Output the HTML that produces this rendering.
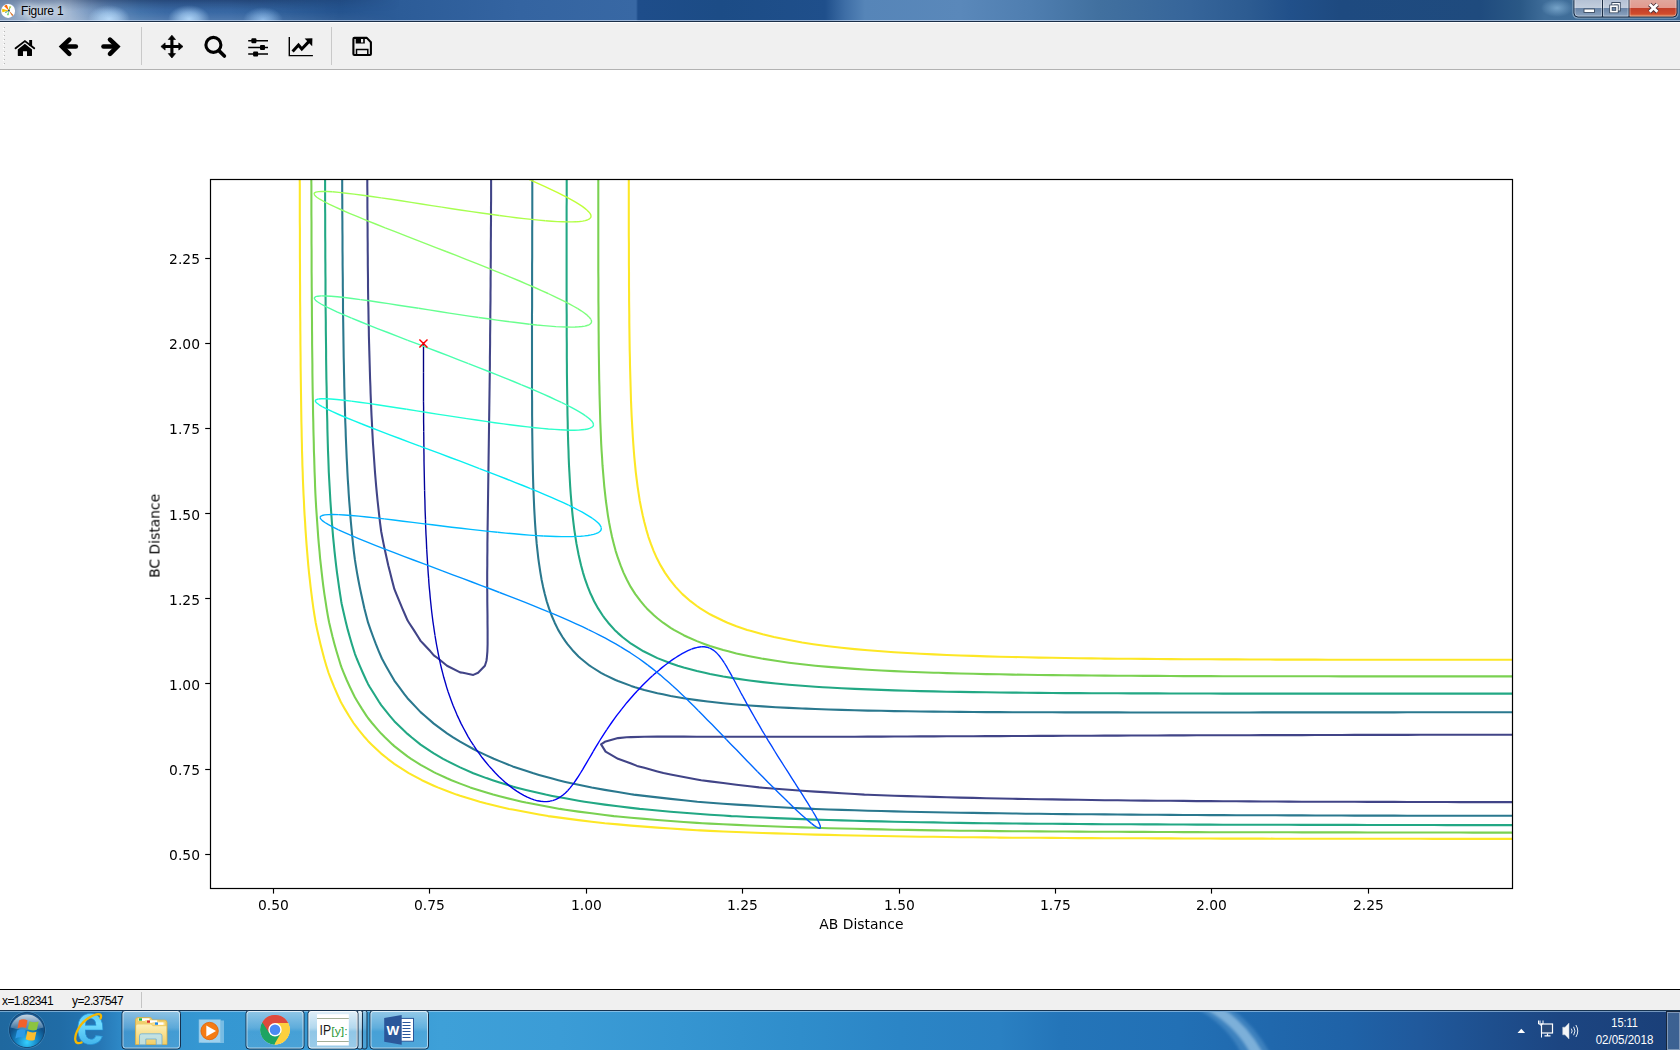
<!DOCTYPE html>
<html><head><meta charset="utf-8"><title>Figure 1</title>
<style>
html,body{margin:0;padding:0;}
body{width:1680px;height:1050px;overflow:hidden;position:relative;background:#fff;font-family:"Liberation Sans",sans-serif;}
#titlebar{position:absolute;left:0;top:0;width:1680px;height:22px;overflow:hidden;
 background:
 radial-gradient(ellipse 21px 14px at 109px 19px,rgba(178,216,250,.95) 0,rgba(178,216,250,.62) 45%,rgba(178,216,250,0) 100%),
 radial-gradient(ellipse 21px 14px at 189px 19px,rgba(170,212,250,.95) 0,rgba(170,212,250,.62) 45%,rgba(170,212,250,0) 100%),
 radial-gradient(ellipse 20px 13px at 263px 20px,rgba(150,198,245,.8) 0,rgba(150,198,245,.48) 45%,rgba(150,198,245,0) 100%),
 radial-gradient(ellipse 16px 9px at 1557px 8px,rgba(140,185,220,.7) 0,rgba(140,185,220,0) 100%),
 linear-gradient(to right,#8099bb 0,#93abc9 30px,#a0b6d2 70px,#7d9cc3 88px,#5f87b8 110px,#4373ab 140px,#3a69a4 165px,#3868a4 230px,#2d5d98 290px,#25548f 340px,#2c5c98 400px,#3464a1 520px,#3868a4 636px,#1e4d8a 638px,#1c4c86 720px,#1f4f8b 825px,#3e6ea6 845px,#5685b8 865px,#5a88ba 960px,#4f7eb0 1030px,#41709f 1100px,#36659a 1190px,#2c5b91 1250px,#21508a 1290px,#1e4a80 1340px,#1f4b7e 1480px,#2a5886 1520px,#3f6d99 1545px,#406e99 1575px,#3a6894 1680px);}
#titlebar .shade{position:absolute;left:0;top:0;width:420px;height:22px;-webkit-mask-image:linear-gradient(to right,rgba(0,0,0,.45) 0,rgba(0,0,0,.6) 60px,#000 100px,#000 250px,transparent 400px);mask-image:linear-gradient(to right,rgba(0,0,0,.45) 0,rgba(0,0,0,.6) 60px,#000 100px,#000 250px,transparent 400px);background:linear-gradient(to bottom,rgba(12,28,66,.42) 0,rgba(12,28,66,.24) 4px,rgba(12,28,66,.06) 9px,rgba(255,255,255,0) 12px,rgba(255,255,255,.10) 19px);}
#titlebar .line1{position:absolute;left:0;top:20px;width:100%;height:1px;background:rgba(215,228,245,.62);}
#titlebar .line2{position:absolute;left:0;top:21px;width:100%;height:1px;background:#1a2e48;}
#title{position:absolute;left:21px;top:4px;font-size:12px;line-height:14px;color:#000;letter-spacing:-0.2px;text-shadow:0 0 6px #fff,0 0 9px #fff,0 0 12px #fff;}
#toolbar{position:absolute;left:0;top:22px;width:1680px;height:47px;background:#f0f0f0;border-top:1px solid #fff;box-sizing:border-box;}
#tbline{position:absolute;left:0;top:69px;width:1680px;height:1px;background:#b2b2b2;}
#canvas{position:absolute;left:0;top:70px;width:1680px;height:919px;background:#fff;}
#cline{position:absolute;left:0;top:989px;width:1680px;height:1px;background:#000;}
#status{position:absolute;left:0;top:990px;width:1680px;height:20px;background:#f0f0f0;font-size:12px;letter-spacing:-0.6px;color:#000;}
#status span{position:absolute;top:4px;line-height:14px;white-space:pre;}
#taskbar{position:absolute;left:0;top:1010px;width:1680px;height:40px;overflow:hidden;
 background:linear-gradient(to right,#1f689f 0,#206ca6 60px,#2677b5 100px,#2f8cca 125px,#3597d2 200px,#3799d3 380px,#3ea0d8 440px,#3b9cd6 560px,#3595d1 680px,#2f8dcb 800px,#2b85c6 900px,#2a80c2 1000px,#2475b9 1060px,#2270b5 1180px,#2068ad 1270px,#1f62a7 1350px,#20599c 1420px,#1e4f8e 1490px,#1c4581 1560px,#1a3f78 1680px);}
#taskbar .top1{position:absolute;left:0;top:0;width:100%;height:1px;background:#16324f;}
#taskbar .top2{position:absolute;left:0;top:1px;width:100%;height:1px;background:rgba(190,220,245,.55);}
.tbtn{position:absolute;top:3px;height:36px;border-radius:3px;box-sizing:border-box;border:1px solid rgba(20,50,90,.75);box-shadow:inset 0 0 0 1px rgba(255,255,255,.45);background:linear-gradient(to bottom,rgba(255,255,255,.38) 0,rgba(255,255,255,.22) 48%,rgba(255,255,255,.08) 52%,rgba(255,255,255,.16) 100%);}
#plot{position:absolute;left:0;top:0;width:1680px;height:1050px;}
.tick{font-family:"DejaVu Sans",sans-serif;font-size:13.89px;fill:#000;}
</style></head>
<body>
<div id="titlebar"><div class="shade"></div><div class="line1"></div><div class="line2"></div>
<div id="title">Figure 1</div>
</div>
<div id="toolbar"></div><div id="tbline"></div>
<div id="canvas"></div><div id="cline"></div>
<div id="status"><span style="left:2px">x=1.82341</span><span style="left:72px">y=2.37547</span>
<div style="position:absolute;left:141px;top:2px;width:1px;height:16px;background:#c4c4c4"></div></div>
<div id="taskbar"><div class="top1"></div><div class="top2"></div></div>
<svg id="plot" width="1680" height="1050" viewBox="0 0 1680 1050">
<defs><clipPath id="axclip"><rect x="210.5" y="179.5" width="1302" height="709"/></clipPath></defs>
<g clip-path="url(#axclip)">
<g fill="none" stroke-width="2.08" stroke-linejoin="round">
<path stroke="#414487" d="M1512.5 802.1 L1499.3 802.1 L1486.2 802.1 L1473.0 802.1 L1459.9 802.1 L1446.7 802.0 L1433.6 802.0 L1420.4 802.0 L1407.2 802.0 L1394.1 801.9 L1380.9 801.9 L1367.8 801.9 L1354.6 801.8 L1341.5 801.8 L1328.3 801.8 L1315.6 801.7 L1302.0 801.7 L1288.9 801.6 L1275.7 801.5 L1262.5 801.5 L1249.4 801.4 L1236.2 801.3 L1223.1 801.2 L1209.9 801.1 L1196.8 801.1 L1183.6 800.9 L1170.5 800.8 L1157.3 800.7 L1144.2 800.6 L1131.0 800.5 L1117.8 800.3 L1104.7 800.2 L1091.5 800.0 L1078.4 799.8 L1065.2 799.6 L1052.1 799.4 L1038.9 799.2 L1025.8 799.0 L1012.6 798.8 L999.5 798.5 L986.3 798.2 L973.1 797.9 L960.0 797.6 L946.8 797.3 L933.7 796.9 L920.5 796.5 L907.4 796.1 L894.2 795.7 L881.1 795.2 L867.9 794.7 L864.4 794.6 L854.7 794.0 L841.6 793.3 L828.4 792.4 L815.3 791.6 L802.1 790.7 L789.0 789.7 L775.8 788.7 L762.7 787.7 L759.1 787.4 L749.5 786.3 L736.4 784.7 L723.2 783.0 L710.0 781.4 L701.2 780.2 L696.9 779.4 L683.7 776.9 L670.6 774.4 L663.4 773.1 L657.4 771.4 L644.3 767.8 L637.0 765.9 L631.1 763.5 L618.0 758.8 L605.6 751.6 L601.1 744.4 L604.8 741.8 L618.0 738.1 L626.6 737.3 L631.1 737.1 L644.3 736.8 L657.4 736.6 L670.6 736.6 L683.7 736.6 L696.9 736.7 L710.0 736.7 L723.2 736.8 L736.4 736.8 L749.5 736.8 L762.7 736.8 L775.8 736.8 L789.0 736.8 L802.1 736.8 L815.3 736.8 L828.4 736.8 L841.6 736.7 L854.7 736.7 L867.9 736.6 L881.1 736.6 L894.2 736.5 L907.4 736.5 L920.5 736.4 L933.7 736.4 L946.8 736.3 L960.0 736.3 L973.1 736.2 L986.3 736.1 L999.5 736.1 L1012.6 736.0 L1025.8 736.0 L1038.9 735.9 L1052.1 735.9 L1065.2 735.8 L1078.4 735.7 L1091.5 735.7 L1104.7 735.6 L1117.8 735.6 L1131.0 735.5 L1144.2 735.5 L1157.3 735.5 L1170.5 735.4 L1183.6 735.4 L1196.8 735.3 L1209.9 735.3 L1223.1 735.3 L1236.2 735.2 L1249.4 735.2 L1262.5 735.1 L1275.7 735.1 L1288.9 735.1 L1302.0 735.1 L1315.2 735.0 L1328.3 735.0 L1341.5 735.0 L1354.6 734.9 L1367.8 734.9 L1380.9 734.9 L1394.1 734.9 L1407.2 734.9 L1420.4 734.8 L1433.6 734.8 L1446.7 734.8 L1459.9 734.8 L1473.0 734.8 L1486.2 734.7 L1499.3 734.7 L1512.5 734.7"/>
<path stroke="#414487" d="M491.1 178.7 L491.1 185.9 L491.1 193.0 L491.1 200.2 L491.0 207.4 L491.0 214.5 L491.0 221.7 L490.9 228.8 L490.9 236.0 L490.8 243.2 L490.8 250.3 L490.8 257.5 L490.7 264.6 L490.7 271.8 L490.6 279.0 L490.6 286.1 L490.5 293.3 L490.5 300.4 L490.4 307.6 L490.3 314.8 L490.3 321.9 L490.2 329.1 L490.1 336.3 L490.1 343.4 L490.0 350.6 L489.9 357.7 L489.9 364.9 L489.8 372.1 L489.7 379.2 L489.6 386.4 L489.5 393.5 L489.4 400.7 L489.3 407.9 L489.2 415.0 L489.1 422.2 L489.0 429.3 L488.9 436.5 L488.8 443.7 L488.7 450.8 L488.6 458.0 L488.5 465.2 L488.4 472.3 L488.3 479.5 L488.2 486.6 L488.1 493.8 L488.0 501.0 L487.9 508.1 L487.8 515.3 L487.7 522.4 L487.6 529.6 L487.5 536.8 L487.4 543.9 L487.4 551.1 L487.3 558.3 L487.3 565.4 L487.2 572.6 L487.2 579.7 L487.2 586.9 L487.3 594.1 L487.3 601.2 L487.4 608.4 L487.5 615.5 L487.5 622.7 L487.6 629.9 L487.6 637.0 L487.6 644.2 L487.4 651.3 L486.8 658.5 L486.4 661.0 L484.9 665.7 L478.1 672.8 L473.3 674.9 L463.0 672.8 L460.1 672.4 L447.0 665.7 L438.2 658.5 L433.8 655.3 L430.4 651.3 L423.8 644.2 L420.6 640.9 L418.2 637.0 L413.7 629.9 L409.0 622.7 L407.5 620.3 L405.4 615.5 L402.3 608.4 L399.3 601.2 L396.4 594.1 L394.3 588.9 L393.8 586.9 L391.9 579.7 L390.1 572.6 L388.3 565.4 L386.7 558.3 L385.1 551.1 L383.6 543.9 L382.2 536.8 L381.2 531.5 L380.0 522.4 L379.2 515.3 L378.4 508.1 L377.6 501.0 L376.9 493.8 L376.2 486.6 L375.6 479.5 L375.0 472.3 L374.5 465.2 L374.0 458.0 L373.5 450.8 L373.0 443.7 L372.6 436.5 L372.2 429.3 L371.9 422.2 L371.5 415.0 L371.2 407.9 L370.9 400.7 L370.6 393.5 L370.4 386.4 L370.1 379.2 L369.9 372.1 L369.7 364.9 L369.5 357.7 L369.3 350.6 L369.1 343.4 L368.9 336.3 L368.8 329.1 L368.6 321.9 L368.5 314.8 L368.4 307.6 L368.2 300.4 L368.1 293.3 L368.0 286.1 L368.0 279.0 L367.9 271.8 L367.8 264.6 L367.8 257.5 L367.7 250.3 L367.7 243.2 L367.6 236.0 L367.6 228.8 L367.5 221.7 L367.5 214.5 L367.4 207.4 L367.4 200.2 L367.4 193.0 L367.3 185.9 L367.3 178.7"/>
<path stroke="#2a788e" d="M1512.5 815.8 L1499.3 815.8 L1486.2 815.8 L1473.0 815.8 L1459.9 815.7 L1446.7 815.7 L1433.6 815.7 L1420.4 815.7 L1407.2 815.7 L1394.1 815.6 L1380.9 815.6 L1367.8 815.6 L1354.6 815.6 L1341.5 815.5 L1328.3 815.5 L1315.2 815.5 L1302.0 815.4 L1288.9 815.4 L1275.7 815.3 L1262.5 815.3 L1249.4 815.2 L1236.2 815.2 L1223.1 815.1 L1209.9 815.1 L1196.8 815.0 L1183.6 815.0 L1170.5 814.9 L1157.3 814.8 L1144.2 814.7 L1131.0 814.6 L1117.8 814.5 L1104.7 814.4 L1091.5 814.3 L1078.4 814.2 L1065.2 814.1 L1052.1 814.0 L1038.9 813.8 L1025.8 813.7 L1012.6 813.5 L999.5 813.3 L986.3 813.1 L973.1 812.9 L960.0 812.7 L946.8 812.5 L933.7 812.2 L920.5 812.0 L907.4 811.7 L894.2 811.4 L881.1 811.0 L867.9 810.7 L854.7 810.3 L841.6 809.9 L828.4 809.5 L815.3 809.0 L812.7 808.9 L802.1 808.4 L789.0 807.7 L775.8 807.0 L762.7 806.2 L749.5 805.4 L736.4 804.6 L723.2 803.7 L710.0 802.7 L697.3 801.7 L683.7 800.3 L670.6 798.9 L657.4 797.4 L644.3 795.9 L633.7 794.6 L631.1 794.2 L618.0 792.0 L604.8 789.9 L591.7 787.6 L578.5 784.8 L565.3 781.9 L558.3 780.2 L552.2 778.6 L539.0 774.9 L532.7 773.1 L525.9 770.8 L512.7 766.4 L499.6 761.1 L493.8 758.8 L486.4 755.4 L478.4 751.6 L473.3 749.0 L465.0 744.4 L460.1 741.6 L453.1 737.3 L447.0 733.3 L442.6 730.1 L433.8 723.6 L424.8 715.8 L420.6 712.1 L417.3 708.6 L410.6 701.5 L407.5 698.2 L404.5 694.3 L399.2 687.2 L394.3 680.6 L389.8 672.8 L385.8 665.7 L381.9 658.5 L378.8 651.3 L375.9 644.2 L373.2 637.0 L370.6 629.9 L368.1 622.7 L366.2 615.5 L364.4 608.4 L362.8 601.2 L361.2 594.1 L359.7 586.9 L358.3 579.7 L357.0 572.6 L355.8 565.4 L354.9 559.7 L353.8 551.1 L353.0 543.9 L352.3 536.8 L351.6 529.6 L350.9 522.4 L350.3 515.3 L349.8 508.1 L349.2 501.0 L348.7 493.8 L348.3 486.6 L347.8 479.5 L347.4 472.3 L347.1 465.2 L346.7 458.0 L346.4 450.8 L346.1 443.7 L345.8 436.5 L345.6 429.3 L345.3 422.2 L345.1 415.0 L344.9 407.9 L344.7 400.7 L344.5 393.5 L344.3 386.4 L344.2 379.2 L344.0 372.1 L343.9 364.9 L343.7 357.7 L343.6 350.6 L343.5 343.4 L343.4 336.3 L343.3 329.1 L343.2 321.9 L343.1 314.8 L343.0 307.6 L343.0 300.4 L342.9 293.3 L342.8 286.1 L342.8 279.0 L342.7 271.8 L342.6 264.6 L342.6 257.5 L342.5 250.3 L342.5 243.2 L342.5 236.0 L342.4 228.8 L342.4 221.7 L342.3 214.5 L342.3 207.4 L342.3 200.2 L342.2 193.0 L342.2 185.9 L342.2 178.7"/>
<path stroke="#2a788e" d="M532.3 178.7 L532.3 185.9 L532.3 193.0 L532.3 200.2 L532.3 207.4 L532.3 214.5 L532.3 221.7 L532.2 228.8 L532.2 236.0 L532.2 243.2 L532.2 250.3 L532.2 257.5 L532.1 264.6 L532.1 271.8 L532.1 279.0 L532.1 286.1 L532.1 293.3 L532.1 300.4 L532.1 307.6 L532.0 314.8 L532.0 321.9 L532.0 329.1 L532.0 336.3 L532.0 343.4 L532.0 350.6 L532.0 357.7 L532.0 364.9 L532.0 372.1 L532.0 379.2 L532.0 386.4 L532.0 393.5 L532.1 400.7 L532.1 407.9 L532.1 415.0 L532.2 422.2 L532.2 429.3 L532.3 436.5 L532.4 443.7 L532.5 450.8 L532.6 458.0 L532.8 465.2 L532.9 472.3 L533.1 479.5 L533.3 486.6 L533.6 493.8 L533.9 501.0 L534.2 508.1 L534.6 515.3 L535.0 522.4 L535.5 529.6 L536.1 536.8 L536.7 543.9 L537.5 551.1 L538.3 558.3 L539.0 563.3 L539.3 565.4 L540.4 572.6 L541.6 579.7 L543.1 586.9 L544.8 594.1 L546.7 601.2 L549.0 608.4 L551.6 615.5 L554.7 622.7 L558.2 629.9 L562.5 637.0 L565.3 641.2 L567.5 644.2 L573.5 651.3 L578.5 656.4 L580.8 658.5 L589.7 665.7 L591.7 667.0 L601.0 672.8 L604.8 674.9 L615.5 680.0 L618.0 681.0 L631.1 685.9 L635.0 687.2 L644.3 689.9 L657.4 693.2 L662.9 694.3 L670.6 695.9 L683.7 698.2 L696.9 700.1 L707.6 701.5 L710.0 701.8 L723.2 703.2 L736.4 704.5 L749.5 705.5 L762.7 706.4 L775.8 707.2 L789.0 707.9 L802.1 708.5 L805.9 708.6 L815.3 709.0 L828.4 709.5 L841.6 709.9 L854.7 710.3 L867.9 710.6 L881.1 710.8 L894.2 711.1 L907.4 711.3 L920.5 711.5 L933.7 711.6 L946.8 711.7 L960.0 711.9 L973.1 712.0 L986.3 712.1 L999.5 712.1 L1012.6 712.2 L1025.8 712.2 L1038.9 712.3 L1052.1 712.3 L1065.2 712.4 L1078.4 712.4 L1091.5 712.4 L1104.7 712.4 L1117.8 712.4 L1131.0 712.5 L1144.2 712.5 L1157.3 712.5 L1170.5 712.5 L1183.6 712.5 L1196.8 712.5 L1209.9 712.5 L1223.1 712.5 L1236.2 712.5 L1249.4 712.5 L1262.5 712.4 L1275.7 712.4 L1288.9 712.4 L1302.0 712.4 L1315.2 712.4 L1328.3 712.4 L1341.5 712.4 L1354.6 712.4 L1367.8 712.4 L1380.9 712.4 L1394.1 712.4 L1407.2 712.3 L1420.4 712.3 L1433.6 712.3 L1446.7 712.3 L1459.9 712.3 L1473.0 712.3 L1486.2 712.3 L1499.3 712.3 L1512.5 712.3"/>
<path stroke="#22a884" d="M1512.5 825.1 L1499.3 825.1 L1486.2 825.1 L1473.0 825.1 L1459.9 825.1 L1446.7 825.1 L1433.6 825.0 L1420.4 825.0 L1407.2 825.0 L1394.1 825.0 L1380.9 825.0 L1367.8 825.0 L1354.6 824.9 L1341.5 824.9 L1328.3 824.9 L1315.2 824.9 L1302.0 824.9 L1288.9 824.8 L1275.7 824.8 L1262.5 824.8 L1249.4 824.7 L1236.2 824.7 L1223.1 824.7 L1209.9 824.6 L1196.8 824.6 L1183.6 824.5 L1170.5 824.5 L1157.3 824.4 L1144.2 824.4 L1131.0 824.3 L1117.8 824.2 L1104.7 824.2 L1091.5 824.1 L1078.4 824.0 L1065.2 823.9 L1052.1 823.8 L1038.9 823.7 L1025.8 823.6 L1012.6 823.5 L999.5 823.4 L986.3 823.2 L984.1 823.2 L973.1 823.1 L960.0 822.9 L946.8 822.7 L933.7 822.4 L920.5 822.2 L907.4 822.0 L894.2 821.7 L881.1 821.4 L867.9 821.1 L854.7 820.7 L841.6 820.4 L828.4 820.0 L815.3 819.6 L802.1 819.1 L789.0 818.6 L775.8 818.1 L762.7 817.5 L749.5 817.0 L736.4 816.3 L731.3 816.1 L723.2 815.5 L710.0 814.7 L696.9 813.7 L683.7 812.7 L670.6 811.7 L657.4 810.5 L644.3 809.3 L639.7 808.9 L631.1 807.9 L618.0 806.3 L604.8 804.6 L591.7 802.8 L584.5 801.7 L578.5 800.7 L565.3 798.3 L552.2 795.9 L545.6 794.6 L539.0 793.0 L525.9 789.9 L516.0 787.4 L512.7 786.5 L499.6 782.5 L492.6 780.2 L486.4 778.1 L473.3 773.2 L460.1 767.4 L457.0 765.9 L447.0 760.9 L443.1 758.8 L433.8 753.3 L431.1 751.6 L420.6 744.6 L411.5 737.3 L407.5 733.9 L403.4 730.1 L396.1 723.0 L394.3 721.2 L389.8 715.8 L384.0 708.6 L381.2 705.1 L378.8 701.5 L374.3 694.3 L369.9 687.2 L368.0 683.9 L366.1 680.0 L362.8 672.8 L359.7 665.7 L356.7 658.5 L354.9 653.8 L354.1 651.3 L351.9 644.2 L349.8 637.0 L347.8 629.9 L346.0 622.7 L344.3 615.5 L342.7 608.4 L341.7 604.0 L341.2 601.2 L340.1 594.1 L339.0 586.9 L338.0 579.7 L337.0 572.6 L336.1 565.4 L335.3 558.3 L334.5 551.1 L333.8 543.9 L333.1 536.8 L332.5 529.6 L331.9 522.4 L331.4 515.3 L330.9 508.1 L330.4 501.0 L330.0 493.8 L329.6 486.6 L329.2 479.5 L328.8 472.3 L328.6 466.4 L328.3 458.0 L328.0 450.8 L327.8 443.7 L327.6 436.5 L327.4 429.3 L327.3 422.2 L327.1 415.0 L326.9 407.9 L326.8 400.7 L326.7 393.5 L326.6 386.4 L326.4 379.2 L326.3 372.1 L326.2 364.9 L326.1 357.7 L326.1 350.6 L326.0 343.4 L325.9 336.3 L325.8 329.1 L325.8 321.9 L325.7 314.8 L325.6 307.6 L325.6 300.4 L325.5 293.3 L325.5 286.1 L325.5 279.0 L325.4 271.8 L325.4 264.6 L325.3 257.5 L325.3 250.3 L325.3 243.2 L325.2 236.0 L325.2 228.8 L325.2 221.7 L325.2 214.5 L325.1 207.4 L325.1 200.2 L325.1 193.0 L325.1 185.9 L325.1 178.7"/>
<path stroke="#22a884" d="M566.7 178.7 L566.7 185.9 L566.7 193.0 L566.7 200.2 L566.6 207.4 L566.6 214.5 L566.6 221.7 L566.6 228.8 L566.6 236.0 L566.6 243.2 L566.6 250.3 L566.6 257.5 L566.6 264.6 L566.6 271.8 L566.6 279.0 L566.6 286.1 L566.6 293.3 L566.6 300.4 L566.6 307.6 L566.7 314.8 L566.7 321.9 L566.7 329.1 L566.7 336.3 L566.8 343.4 L566.8 350.6 L566.8 357.7 L566.9 364.9 L566.9 372.1 L567.0 379.2 L567.1 386.4 L567.2 393.5 L567.3 400.7 L567.4 407.9 L567.5 415.0 L567.7 422.2 L567.8 429.3 L568.0 436.5 L568.2 443.7 L568.5 450.8 L568.7 458.0 L569.0 465.2 L569.4 472.3 L569.8 479.5 L570.2 486.6 L570.7 493.8 L571.3 501.0 L571.9 508.1 L572.6 515.3 L573.4 522.4 L574.3 529.6 L575.4 536.8 L576.5 543.9 L577.9 551.1 L578.5 554.2 L579.4 558.3 L581.1 565.4 L583.0 572.6 L585.2 579.7 L587.8 586.9 L590.7 594.1 L591.7 596.0 L594.1 601.2 L598.1 608.4 L602.7 615.5 L604.8 618.4 L608.2 622.7 L614.6 629.9 L618.0 633.1 L622.4 637.0 L631.1 643.7 L643.5 651.3 L657.4 658.1 L670.6 663.3 L677.8 665.7 L683.7 667.5 L696.9 671.0 L704.8 672.8 L710.0 674.0 L723.2 676.5 L736.4 678.6 L745.9 680.0 L749.5 680.5 L762.7 682.1 L775.8 683.5 L789.0 684.7 L802.1 685.8 L815.3 686.7 L822.8 687.2 L828.4 687.5 L841.6 688.2 L854.7 688.9 L867.9 689.4 L881.1 689.9 L894.2 690.4 L907.4 690.8 L920.5 691.1 L933.7 691.4 L946.8 691.7 L960.0 691.9 L973.1 692.1 L986.3 692.3 L999.5 692.5 L1012.6 692.6 L1025.8 692.7 L1038.9 692.9 L1052.1 693.0 L1065.2 693.1 L1078.4 693.1 L1091.5 693.2 L1104.7 693.3 L1117.8 693.3 L1131.0 693.4 L1144.2 693.4 L1157.3 693.4 L1170.5 693.5 L1183.6 693.5 L1196.8 693.5 L1209.9 693.5 L1223.1 693.6 L1236.2 693.6 L1249.4 693.6 L1262.5 693.6 L1275.7 693.6 L1288.9 693.6 L1302.0 693.6 L1315.2 693.6 L1328.3 693.6 L1341.5 693.6 L1354.6 693.6 L1367.8 693.6 L1380.9 693.6 L1394.1 693.6 L1407.2 693.6 L1420.4 693.6 L1433.6 693.6 L1446.7 693.6 L1459.9 693.6 L1473.0 693.6 L1486.2 693.6 L1499.3 693.6 L1512.5 693.6"/>
<path stroke="#7ad151" d="M1512.5 832.6 L1499.3 832.6 L1486.2 832.6 L1473.0 832.6 L1459.9 832.5 L1446.7 832.5 L1433.6 832.5 L1420.4 832.5 L1407.2 832.5 L1394.1 832.5 L1380.9 832.5 L1367.8 832.5 L1354.6 832.4 L1341.5 832.4 L1328.3 832.4 L1315.2 832.4 L1302.0 832.4 L1288.9 832.3 L1275.7 832.3 L1262.5 832.3 L1249.4 832.3 L1236.2 832.2 L1223.1 832.2 L1209.9 832.2 L1196.8 832.1 L1183.6 832.1 L1170.5 832.0 L1157.3 832.0 L1144.2 831.9 L1131.0 831.9 L1117.8 831.8 L1104.7 831.8 L1091.5 831.7 L1078.4 831.6 L1065.2 831.5 L1052.1 831.5 L1038.9 831.4 L1025.8 831.3 L1012.6 831.2 L999.5 831.1 L986.3 830.9 L973.1 830.8 L960.0 830.7 L946.8 830.5 L935.2 830.4 L920.5 830.1 L907.4 829.9 L894.2 829.7 L881.1 829.4 L867.9 829.1 L854.7 828.8 L841.6 828.5 L828.4 828.2 L815.3 827.8 L802.1 827.4 L789.0 827.0 L775.8 826.5 L762.7 826.0 L749.5 825.5 L736.4 824.9 L723.2 824.3 L710.0 823.6 L702.4 823.2 L696.9 822.9 L683.7 822.0 L670.6 821.0 L657.4 820.0 L644.3 818.9 L631.1 817.7 L618.0 816.5 L613.8 816.1 L604.8 815.0 L591.7 813.3 L578.5 811.6 L565.3 809.7 L559.9 808.9 L552.2 807.5 L539.0 805.1 L525.9 802.6 L521.9 801.7 L512.7 799.5 L499.6 796.3 L493.1 794.6 L486.4 792.6 L473.3 788.4 L470.2 787.4 L460.1 783.6 L451.5 780.2 L447.0 778.3 L435.8 773.1 L433.8 772.1 L422.5 765.9 L420.6 764.8 L411.1 758.8 L407.5 756.3 L401.3 751.6 L394.3 746.1 L392.4 744.4 L384.9 737.3 L381.2 733.6 L378.1 730.1 L372.0 723.0 L368.0 718.0 L366.5 715.8 L361.8 708.6 L357.4 701.5 L354.9 697.3 L353.4 694.3 L350.0 687.2 L346.7 680.0 L343.7 672.8 L341.7 667.9 L340.9 665.7 L338.7 658.5 L336.5 651.3 L334.5 644.2 L332.6 637.0 L330.9 629.9 L329.2 622.7 L328.6 619.7 L327.8 615.5 L326.6 608.4 L325.5 601.2 L324.4 594.1 L323.4 586.9 L322.5 579.7 L321.7 572.6 L320.9 565.4 L320.1 558.3 L319.5 551.1 L318.8 543.9 L318.2 536.8 L317.7 529.6 L317.2 522.4 L316.7 515.3 L316.2 508.1 L315.8 501.0 L315.4 493.8 L315.1 486.6 L314.9 479.5 L314.6 472.3 L314.4 465.2 L314.2 458.0 L313.9 450.8 L313.8 443.7 L313.6 436.5 L313.4 429.3 L313.3 422.2 L313.1 415.0 L313.0 407.9 L312.9 400.7 L312.7 393.5 L312.6 386.4 L312.5 379.2 L312.4 372.1 L312.4 364.9 L312.3 357.7 L312.2 350.6 L312.1 343.4 L312.1 336.3 L312.0 329.1 L312.0 321.9 L311.9 314.8 L311.9 307.6 L311.8 300.4 L311.8 293.3 L311.7 286.1 L311.7 279.0 L311.6 271.8 L311.6 264.6 L311.6 257.5 L311.6 250.3 L311.5 243.2 L311.5 236.0 L311.5 228.8 L311.5 221.7 L311.4 214.5 L311.4 207.4 L311.4 200.2 L311.4 193.0 L311.4 185.9 L311.3 178.7"/>
<path stroke="#7ad151" d="M598.3 178.7 L598.3 185.9 L598.3 193.0 L598.3 200.2 L598.3 207.4 L598.3 214.5 L598.3 221.7 L598.3 228.8 L598.3 236.0 L598.3 243.2 L598.3 250.3 L598.3 257.5 L598.3 264.6 L598.3 271.8 L598.4 279.0 L598.4 286.1 L598.4 293.3 L598.4 300.4 L598.5 307.6 L598.5 314.8 L598.6 321.9 L598.6 329.1 L598.7 336.3 L598.7 343.4 L598.8 350.6 L598.9 357.7 L599.0 364.9 L599.1 372.1 L599.2 379.2 L599.4 386.4 L599.5 393.5 L599.7 400.7 L599.9 407.9 L600.1 415.0 L600.3 422.2 L600.6 429.3 L600.9 436.5 L601.2 443.7 L601.6 450.8 L602.1 458.0 L602.5 465.2 L603.1 472.3 L603.7 479.5 L604.3 486.6 L604.8 491.1 L605.1 493.8 L605.9 501.0 L606.9 508.1 L607.9 515.3 L609.1 522.4 L610.5 529.6 L612.0 536.8 L613.8 543.9 L615.7 551.1 L618.0 558.2 L620.6 565.4 L623.5 572.6 L626.9 579.7 L630.7 586.9 L635.3 594.1 L640.6 601.2 L644.3 605.6 L646.8 608.4 L654.2 615.5 L657.4 618.3 L663.1 622.7 L670.6 627.8 L673.9 629.9 L683.7 635.2 L687.5 637.0 L696.9 641.1 L705.0 644.2 L710.0 646.0 L723.2 650.0 L728.3 651.3 L736.4 653.4 L749.5 656.2 L761.5 658.5 L775.8 660.8 L789.0 662.7 L802.1 664.3 L815.3 665.7 L828.4 666.9 L841.6 667.9 L854.7 668.9 L867.9 669.7 L881.1 670.5 L894.2 671.1 L907.4 671.7 L920.5 672.2 L933.7 672.7 L938.6 672.8 L946.8 673.1 L960.0 673.5 L973.1 673.8 L986.3 674.1 L999.5 674.3 L1012.6 674.6 L1025.8 674.8 L1038.9 675.0 L1052.1 675.1 L1065.2 675.3 L1078.4 675.4 L1091.5 675.5 L1104.7 675.6 L1117.8 675.7 L1131.0 675.8 L1144.2 675.9 L1157.3 675.9 L1170.5 676.0 L1183.6 676.1 L1196.8 676.1 L1209.9 676.1 L1223.1 676.2 L1236.2 676.2 L1249.4 676.2 L1262.5 676.3 L1275.7 676.3 L1288.9 676.3 L1302.0 676.3 L1315.2 676.3 L1328.3 676.3 L1341.5 676.4 L1354.6 676.4 L1367.8 676.4 L1380.9 676.4 L1394.1 676.4 L1407.2 676.4 L1420.4 676.4 L1433.6 676.4 L1446.7 676.4 L1459.9 676.4 L1473.0 676.4 L1486.2 676.4 L1499.3 676.4 L1512.5 676.4"/>
<path stroke="#fde725" d="M1512.5 838.9 L1499.3 838.9 L1486.2 838.9 L1473.0 838.9 L1459.9 838.9 L1446.7 838.9 L1433.6 838.9 L1420.4 838.8 L1407.2 838.8 L1394.1 838.8 L1380.9 838.8 L1367.8 838.8 L1354.6 838.8 L1341.5 838.8 L1328.3 838.7 L1315.2 838.7 L1302.0 838.7 L1288.9 838.7 L1275.7 838.7 L1262.5 838.6 L1249.4 838.6 L1236.2 838.6 L1223.1 838.6 L1209.9 838.5 L1196.8 838.5 L1183.6 838.5 L1170.5 838.4 L1157.3 838.4 L1144.2 838.3 L1131.0 838.3 L1117.8 838.2 L1104.7 838.2 L1091.5 838.1 L1078.4 838.1 L1065.2 838.0 L1052.1 837.9 L1038.9 837.8 L1025.8 837.8 L1012.6 837.7 L999.5 837.6 L996.1 837.5 L986.3 837.4 L973.1 837.3 L960.0 837.2 L946.8 837.0 L933.7 836.8 L920.5 836.7 L907.4 836.5 L894.2 836.2 L881.1 836.0 L867.9 835.8 L854.7 835.5 L841.6 835.2 L828.4 834.9 L815.3 834.6 L802.1 834.2 L789.0 833.8 L775.8 833.4 L762.7 833.0 L749.5 832.5 L736.4 832.0 L723.2 831.5 L710.0 830.9 L700.0 830.4 L696.9 830.2 L683.7 829.4 L670.6 828.5 L657.4 827.6 L644.3 826.6 L631.1 825.6 L618.0 824.4 L604.8 823.2 L591.7 821.7 L578.5 820.1 L565.3 818.4 L552.2 816.6 L548.2 816.1 L539.0 814.5 L525.9 812.1 L512.7 809.6 L509.1 808.9 L499.6 806.7 L486.4 803.5 L479.7 801.7 L473.3 799.8 L460.1 795.8 L456.5 794.6 L447.0 791.0 L437.7 787.4 L433.8 785.7 L421.9 780.2 L408.7 773.1 L397.4 765.9 L394.3 763.8 L387.7 758.8 L381.2 753.6 L379.0 751.6 L371.5 744.4 L368.0 740.9 L364.8 737.3 L358.9 730.1 L354.9 724.9 L353.5 723.0 L348.9 715.8 L344.6 708.6 L341.7 703.6 L340.6 701.5 L337.3 694.3 L334.2 687.2 L331.3 680.0 L328.6 673.0 L326.3 665.7 L324.2 658.5 L322.3 651.3 L320.5 644.2 L318.8 637.0 L317.2 629.9 L315.7 622.7 L314.5 615.5 L313.4 608.4 L312.4 601.2 L311.5 594.1 L310.6 586.9 L309.8 579.7 L309.0 572.6 L308.3 565.4 L307.7 558.3 L307.1 551.1 L306.5 543.9 L306.0 536.8 L305.5 529.6 L305.1 522.4 L304.6 515.3 L304.2 508.1 L303.9 501.0 L303.5 493.8 L303.2 486.6 L302.9 479.5 L302.7 472.3 L302.4 465.2 L302.3 459.8 L302.0 450.8 L301.9 443.7 L301.7 436.5 L301.6 429.3 L301.4 422.2 L301.3 415.0 L301.2 407.9 L301.1 400.7 L301.0 393.5 L300.9 386.4 L300.8 379.2 L300.7 372.1 L300.6 364.9 L300.6 357.7 L300.5 350.6 L300.4 343.4 L300.4 336.3 L300.3 329.1 L300.3 321.9 L300.2 314.8 L300.2 307.6 L300.1 300.4 L300.1 293.3 L300.1 286.1 L300.0 279.0 L300.0 271.8 L300.0 264.6 L299.9 257.5 L299.9 250.3 L299.9 243.2 L299.9 236.0 L299.9 228.8 L299.8 221.7 L299.8 214.5 L299.8 207.4 L299.8 200.2 L299.8 193.0 L299.8 185.9 L299.7 178.7"/>
<path stroke="#fde725" d="M628.8 178.7 L628.8 185.9 L628.8 193.0 L628.8 200.2 L628.8 207.4 L628.8 214.5 L628.8 221.7 L628.8 228.8 L628.8 236.0 L628.9 243.2 L628.9 250.3 L628.9 257.5 L628.9 264.6 L629.0 271.8 L629.0 279.0 L629.0 286.1 L629.1 293.3 L629.1 300.4 L629.2 307.6 L629.3 314.8 L629.3 321.9 L629.4 329.1 L629.5 336.3 L629.6 343.4 L629.7 350.6 L629.9 357.7 L630.0 364.9 L630.2 372.1 L630.4 379.2 L630.6 386.4 L630.8 393.5 L631.0 400.7 L631.1 402.9 L631.3 407.9 L631.6 415.0 L632.0 422.2 L632.4 429.3 L632.8 436.5 L633.3 443.7 L633.8 450.8 L634.4 458.0 L635.1 465.2 L635.8 472.3 L636.7 479.5 L637.6 486.6 L638.7 493.8 L639.8 501.0 L641.2 508.1 L642.7 515.3 L644.3 522.1 L646.3 529.6 L648.4 536.8 L650.9 543.9 L653.7 551.1 L656.9 558.3 L660.6 565.4 L664.9 572.6 L669.8 579.7 L675.6 586.9 L682.4 594.1 L690.5 601.2 L696.9 606.0 L700.3 608.4 L710.0 614.3 L712.4 615.5 L723.2 620.8 L727.5 622.7 L736.4 626.2 L747.2 629.9 L749.5 630.6 L762.7 634.3 L773.9 637.0 L789.0 640.1 L802.1 642.5 L813.3 644.2 L828.4 646.2 L841.6 647.7 L854.7 649.1 L867.9 650.3 L881.1 651.3 L894.2 652.2 L907.4 653.0 L920.5 653.8 L933.7 654.4 L946.8 655.0 L960.0 655.5 L973.1 655.9 L986.3 656.4 L999.5 656.7 L1012.6 657.0 L1025.8 657.3 L1038.9 657.6 L1052.1 657.8 L1065.2 658.0 L1078.4 658.2 L1091.5 658.4 L1100.7 658.5 L1104.7 658.6 L1117.8 658.7 L1131.0 658.8 L1144.2 658.9 L1157.3 659.0 L1170.5 659.1 L1183.6 659.2 L1196.8 659.3 L1209.9 659.3 L1223.1 659.4 L1236.2 659.4 L1249.4 659.5 L1262.5 659.5 L1275.7 659.6 L1288.9 659.6 L1302.0 659.6 L1315.2 659.6 L1328.3 659.7 L1341.5 659.7 L1354.6 659.7 L1367.8 659.7 L1380.9 659.7 L1394.1 659.7 L1407.2 659.8 L1420.4 659.8 L1433.6 659.8 L1446.7 659.8 L1459.9 659.8 L1473.0 659.8 L1486.2 659.8 L1499.3 659.8 L1512.5 659.8"/>
</g>
<g fill="none" stroke-width="1.38" stroke-linecap="butt" stroke-linejoin="round">
<path stroke="#000080" d="M423.5 342.4 L423.5 347.4 L423.5 352.3 L423.5 357.3 L423.5 362.2 L423.5 367.2 L423.5 372.2"/>
<path stroke="#000089" d="M423.5 372.2 L423.5 377.1 L423.5 382.1 L423.5 387.0 L423.5 392.0 L423.5 396.9 L423.5 401.8"/>
<path stroke="#00008d" d="M423.5 401.8 L423.6 406.8 L423.6 411.7 L423.6 416.7 L423.6 421.6 L423.7 426.6 L423.7 431.5"/>
<path stroke="#000092" d="M423.7 431.5 L423.8 436.4 L423.8 441.4 L423.9 446.3 L423.9 451.2 L424.0 456.1 L424.0 461.1"/>
<path stroke="#00009b" d="M424.0 461.1 L424.1 466.0 L424.2 470.9 L424.3 475.8 L424.4 480.7 L424.5 485.6 L424.6 490.5"/>
<path stroke="#00009f" d="M424.6 490.5 L424.7 495.4 L424.9 500.3 L425.0 505.2 L425.1 510.1 L425.3 515.0 L425.5 519.9"/>
<path stroke="#0000a4" d="M425.5 519.9 L425.6 524.8 L425.8 529.6 L426.0 534.5 L426.3 539.4 L426.5 544.2 L426.7 549.1"/>
<path stroke="#0000ad" d="M426.7 549.1 L427.0 554.0 L427.3 558.8 L427.6 563.6 L427.9 568.5 L428.2 573.3 L428.6 578.1"/>
<path stroke="#0000b2" d="M428.6 578.1 L428.9 583.0 L429.3 587.8 L429.8 592.6 L430.2 597.4 L430.7 602.2 L431.2 607.0"/>
<path stroke="#0000bb" d="M431.2 607.0 L431.7 611.7 L432.3 616.5 L432.9 621.3 L433.6 626.0 L434.3 630.8 L435.0 635.5"/>
<path stroke="#0000bf" d="M435.0 635.5 L435.8 640.3 L436.6 645.0 L437.5 649.7 L438.4 654.4 L439.4 659.1 L440.4 663.8"/>
<path stroke="#0000c4" d="M440.4 663.8 L441.5 668.5 L442.7 673.2 L443.9 677.8 L445.3 682.5 L446.6 687.1 L448.1 691.7"/>
<path stroke="#0000cd" d="M448.1 691.7 L449.7 696.3 L451.4 700.9 L453.1 705.5 L455.0 710.0 L456.9 714.6 L459.0 719.1"/>
<path stroke="#0000d1" d="M459.0 719.1 L461.1 723.6 L463.4 728.0 L465.8 732.4 L468.2 736.8 L470.8 741.1 L473.6 745.4"/>
<path stroke="#0000da" d="M473.6 745.4 L476.4 749.6 L479.3 753.7 L482.3 757.8 L485.5 761.7 L488.7 765.6 L492.0 769.3"/>
<path stroke="#0000df" d="M492.0 769.3 L495.4 773.0 L498.8 776.4 L502.4 779.8 L505.9 782.9 L509.5 785.9 L513.1 788.6"/>
<path stroke="#0000e3" d="M513.1 788.6 L516.7 791.1 L520.3 793.4 L523.8 795.4 L527.3 797.2 L530.8 798.7 L534.2 799.9"/>
<path stroke="#0000ed" d="M534.2 799.9 L537.5 800.8 L540.7 801.3 L543.9 801.6 L546.9 801.6 L549.8 801.2 L552.6 800.6"/>
<path stroke="#0000f1" d="M552.6 800.6 L555.4 799.6 L558.0 798.3 L560.5 796.8 L563.0 795.0 L565.4 792.9 L567.6 790.7"/>
<path stroke="#0000f6" d="M567.6 790.7 L569.9 788.1 L572.1 785.4 L574.2 782.6 L576.3 779.5 L578.4 776.3 L580.5 773.0"/>
<path stroke="#0000ff" d="M580.5 773.0 L582.6 769.6 L584.6 766.1 L586.7 762.6 L588.8 759.0 L591.0 755.3 L593.1 751.6"/>
<path stroke="#0000ff" d="M593.1 751.6 L595.3 747.9 L597.6 744.2 L599.8 740.5 L602.1 736.9 L604.5 733.2 L606.8 729.6"/>
<path stroke="#0000ff" d="M606.8 729.6 L609.2 726.1 L611.7 722.5 L614.1 719.1 L616.6 715.7 L619.2 712.3 L621.7 709.1"/>
<path stroke="#0000ff" d="M621.7 709.1 L624.3 705.9 L626.8 702.7 L629.4 699.7 L632.0 696.7 L634.6 693.8 L637.2 691.0"/>
<path stroke="#0004ff" d="M637.2 691.0 L639.8 688.3 L642.4 685.6 L644.9 683.0 L647.5 680.5 L650.0 678.1 L652.5 675.8"/>
<path stroke="#000cff" d="M652.5 675.8 L655.0 673.6 L657.5 671.5 L659.9 669.4 L662.3 667.4 L664.7 665.5 L667.0 663.8"/>
<path stroke="#0010ff" d="M667.0 663.8 L669.3 662.0 L671.5 660.4 L673.7 658.9 L675.9 657.5 L678.0 656.1 L680.1 654.8"/>
<path stroke="#0018ff" d="M680.1 654.8 L682.1 653.7 L684.1 652.6 L686.0 651.6 L687.9 650.7 L689.7 649.9 L691.5 649.2"/>
<path stroke="#001cff" d="M691.5 649.2 L693.2 648.5 L694.9 648.0 L696.6 647.6 L698.2 647.2 L699.7 647.0 L701.2 646.8"/>
<path stroke="#0020ff" d="M701.2 646.8 L702.7 646.8 L704.1 646.8 L705.5 647.0 L706.9 647.2 L708.2 647.6 L709.5 648.1"/>
<path stroke="#0028ff" d="M709.5 648.1 L710.8 648.6 L712.0 649.3 L713.3 650.1 L714.5 651.0 L715.7 652.0 L716.9 653.2"/>
<path stroke="#002cff" d="M716.9 653.2 L718.0 654.4 L719.2 655.8 L720.4 657.3 L721.6 658.9 L722.8 660.6 L724.1 662.5"/>
<path stroke="#0030ff" d="M724.1 662.5 L725.3 664.5 L726.6 666.7 L727.9 669.0 L729.3 671.4 L730.7 673.9 L732.2 676.7"/>
<path stroke="#0038ff" d="M732.2 676.7 L733.8 679.5 L735.4 682.5 L737.1 685.7 L738.9 689.0 L740.7 692.5 L742.7 696.1"/>
<path stroke="#003cff" d="M742.7 696.1 L744.8 699.9 L746.9 703.8 L749.2 707.9 L751.6 712.1 L754.1 716.5 L756.7 721.1"/>
<path stroke="#0044ff" d="M756.7 721.1 L759.4 725.7 L762.2 730.6 L765.2 735.5 L768.2 740.6 L771.4 745.7 L774.6 751.0"/>
<path stroke="#0048ff" d="M774.6 751.0 L777.9 756.3 L781.3 761.6 L784.7 767.0 L788.2 772.4 L791.6 777.8 L795.0 783.1"/>
<path stroke="#004cff" d="M795.0 783.1 L798.3 788.3 L801.6 793.4 L804.7 798.3 L807.6 802.9 L810.3 807.4 L812.8 811.5"/>
<path stroke="#0054ff" d="M812.8 811.5 L815.0 815.2 L816.9 818.6 L818.4 821.5 L819.5 823.9 L820.2 825.8 L820.4 827.2"/>
<path stroke="#0058ff" d="M820.4 827.2 L820.2 828.0 L819.4 828.3 L818.2 827.9 L816.5 827.0 L814.3 825.6 L811.7 823.6"/>
<path stroke="#0060ff" d="M811.7 823.6 L808.7 821.1 L805.2 818.1 L801.4 814.7 L797.3 810.9 L792.9 806.8 L788.3 802.3"/>
<path stroke="#0064ff" d="M788.3 802.3 L783.5 797.6 L778.5 792.7 L773.4 787.6 L768.2 782.4 L762.9 777.0 L757.6 771.7"/>
<path stroke="#0068ff" d="M757.6 771.7 L752.3 766.3 L747.1 760.9 L741.9 755.5 L736.7 750.1 L731.6 744.9 L726.6 739.7"/>
<path stroke="#0070ff" d="M726.6 739.7 L721.7 734.6 L716.8 729.5 L712.1 724.6 L707.4 719.9 L702.9 715.2 L698.4 710.7"/>
<path stroke="#0074ff" d="M698.4 710.7 L694.0 706.3 L689.6 702.0 L685.4 697.8 L681.1 693.7 L677.0 689.8 L672.8 686.0"/>
<path stroke="#0078ff" d="M672.8 686.0 L668.7 682.3 L664.5 678.7 L660.4 675.1 L656.3 671.7 L652.1 668.4 L647.8 665.1"/>
<path stroke="#0080ff" d="M647.8 665.1 L643.5 661.9 L639.2 658.8 L634.7 655.8 L630.2 652.7 L625.5 649.8 L620.7 646.8"/>
<path stroke="#0084ff" d="M620.7 646.8 L615.7 643.9 L610.6 641.1 L605.4 638.2 L599.9 635.3 L594.3 632.5 L588.4 629.6"/>
<path stroke="#008cff" d="M588.4 629.6 L582.4 626.7 L576.1 623.8 L569.6 620.9 L562.8 617.9 L555.8 614.9 L548.5 611.9"/>
<path stroke="#0090ff" d="M548.5 611.9 L541.0 608.8 L533.2 605.6 L525.2 602.4 L516.9 599.2 L508.4 595.8 L499.6 592.5"/>
<path stroke="#0094ff" d="M499.6 592.5 L490.6 589.0 L481.4 585.6 L472.0 582.0 L462.5 578.4 L452.8 574.8 L443.0 571.1"/>
<path stroke="#009cff" d="M443.0 571.1 L433.2 567.4 L423.3 563.7 L413.5 560.0 L403.8 556.4 L394.2 552.7 L384.9 549.1"/>
<path stroke="#00a0ff" d="M384.9 549.1 L375.9 545.6 L367.3 542.1 L359.2 538.8 L351.6 535.6 L344.7 532.6 L338.5 529.8"/>
<path stroke="#00a8ff" d="M338.5 529.8 L333.1 527.1 L328.5 524.7 L324.9 522.5 L322.3 520.6 L320.7 518.9 L320.1 517.5"/>
<path stroke="#00acff" d="M320.1 517.5 L320.6 516.4 L322.2 515.5 L324.7 514.9 L328.3 514.6 L332.8 514.5 L338.2 514.6"/>
<path stroke="#00b0ff" d="M338.2 514.6 L344.3 515.0 L351.2 515.5 L358.7 516.1 L366.8 517.0 L375.4 517.9 L384.3 518.9"/>
<path stroke="#00b8ff" d="M384.3 518.9 L393.6 520.0 L403.1 521.2 L412.7 522.4 L422.5 523.6 L432.2 524.8 L442.0 526.0"/>
<path stroke="#00bcff" d="M442.0 526.0 L451.7 527.2 L461.2 528.3 L470.6 529.4 L479.8 530.4 L488.7 531.4 L497.5 532.3"/>
<path stroke="#00c0ff" d="M497.5 532.3 L505.9 533.1 L514.0 533.8 L521.8 534.5 L529.3 535.1 L536.5 535.6 L543.3 536.0"/>
<path stroke="#00c8ff" d="M543.3 536.0 L549.8 536.3 L555.9 536.5 L561.6 536.6 L566.9 536.6 L571.9 536.6 L576.5 536.4"/>
<path stroke="#00ccff" d="M576.5 536.4 L580.7 536.2 L584.5 535.9 L587.9 535.5 L591.0 534.9 L593.6 534.3 L595.9 533.7"/>
<path stroke="#00d4ff" d="M595.9 533.7 L597.8 532.9 L599.2 532.0 L600.3 531.0 L601.0 530.0 L601.3 528.8 L601.2 527.6"/>
<path stroke="#00d8ff" d="M601.2 527.6 L600.7 526.3 L599.8 524.8 L598.5 523.3 L596.8 521.7 L594.7 520.0 L592.2 518.2"/>
<path stroke="#00dcfe" d="M592.2 518.2 L589.3 516.3 L586.0 514.3 L582.3 512.2 L578.1 510.0 L573.6 507.6 L568.6 505.2"/>
<path stroke="#00e4f8" d="M568.6 505.2 L563.3 502.7 L557.5 500.1 L551.4 497.4 L544.8 494.6 L537.9 491.6 L530.6 488.6"/>
<path stroke="#02e8f4" d="M530.6 488.6 L522.9 485.5 L514.8 482.3 L506.5 479.0 L497.8 475.6 L488.7 472.1 L479.5 468.6"/>
<path stroke="#09f0ee" d="M479.5 468.6 L469.9 464.9 L460.2 461.2 L450.2 457.5 L440.2 453.7 L430.0 449.9 L419.8 446.1"/>
<path stroke="#0cf4eb" d="M419.8 446.1 L409.7 442.3 L399.6 438.5 L389.8 434.8 L380.1 431.1 L370.8 427.5 L361.9 424.0"/>
<path stroke="#0ff8e7" d="M361.9 424.0 L353.6 420.7 L345.8 417.5 L338.8 414.5 L332.5 411.7 L327.1 409.1 L322.6 406.8"/>
<path stroke="#16ffe1" d="M322.6 406.8 L319.2 404.8 L316.8 403.0 L315.5 401.6 L315.4 400.4 L316.3 399.6 L318.4 399.0"/>
<path stroke="#19ffde" d="M318.4 399.0 L321.5 398.7 L325.7 398.7 L330.8 399.0 L336.8 399.5 L343.7 400.2 L351.2 401.1"/>
<path stroke="#1cffdb" d="M351.2 401.1 L359.4 402.2 L368.1 403.4 L377.3 404.8 L386.9 406.2 L396.7 407.7 L406.7 409.3"/>
<path stroke="#23ffd4" d="M406.7 409.3 L416.8 410.9 L427.0 412.5 L437.1 414.1 L447.2 415.6 L457.1 417.1 L466.9 418.6"/>
<path stroke="#26ffd1" d="M466.9 418.6 L476.5 420.0 L485.8 421.4 L494.8 422.7 L503.6 423.9 L512.0 425.0 L520.0 426.0"/>
<path stroke="#2cffca" d="M520.0 426.0 L527.7 426.9 L535.0 427.7 L541.9 428.4 L548.4 429.0 L554.5 429.4 L560.1 429.8"/>
<path stroke="#30ffc7" d="M560.1 429.8 L565.4 430.0 L570.2 430.2 L574.5 430.2 L578.4 430.1 L581.9 429.8 L584.9 429.5"/>
<path stroke="#33ffc4" d="M584.9 429.5 L587.5 429.0 L589.6 428.4 L591.2 427.7 L592.4 426.9 L593.2 426.0 L593.5 424.9"/>
<path stroke="#39ffbe" d="M593.5 424.9 L593.3 423.7 L592.7 422.4 L591.6 420.9 L590.1 419.4 L588.1 417.7 L585.6 415.9"/>
<path stroke="#3cffba" d="M585.6 415.9 L582.7 413.9 L579.4 411.9 L575.5 409.7 L571.3 407.4 L566.6 405.0 L561.4 402.4"/>
<path stroke="#43ffb4" d="M561.4 402.4 L555.8 399.8 L549.8 397.0 L543.4 394.1 L536.5 391.2 L529.3 388.0 L521.6 384.8"/>
<path stroke="#46ffb1" d="M521.6 384.8 L513.6 381.5 L505.2 378.1 L496.5 374.6 L487.4 371.0 L478.1 367.3 L468.5 363.6"/>
<path stroke="#49ffad" d="M468.5 363.6 L458.7 359.8 L448.7 355.9 L438.5 352.0 L428.3 348.1 L418.1 344.2 L407.8 340.3"/>
<path stroke="#50ffa7" d="M407.8 340.3 L397.7 336.4 L387.8 332.5 L378.1 328.8 L368.8 325.1 L359.9 321.5 L351.6 318.1"/>
<path stroke="#53ffa4" d="M351.6 318.1 L343.9 314.8 L336.9 311.8 L330.7 308.9 L325.4 306.3 L321.0 304.0 L317.7 302.0"/>
<path stroke="#56ffa0" d="M317.7 302.0 L315.5 300.2 L314.4 298.7 L314.5 297.6 L315.6 296.7 L317.9 296.2 L321.3 295.9"/>
<path stroke="#5dff9a" d="M321.3 295.9 L325.7 296.0 L331.1 296.2 L337.3 296.8 L344.4 297.5 L352.1 298.5 L360.5 299.6"/>
<path stroke="#60ff97" d="M360.5 299.6 L369.4 300.8 L378.8 302.2 L388.5 303.6 L398.4 305.2 L408.5 306.7 L418.7 308.3"/>
<path stroke="#66ff90" d="M418.7 308.3 L429.0 309.9 L439.2 311.5 L449.3 313.1 L459.3 314.6 L469.1 316.1 L478.7 317.5"/>
<path stroke="#6aff8d" d="M478.7 317.5 L488.0 318.8 L497.0 320.1 L505.7 321.3 L514.0 322.3 L522.0 323.3 L529.6 324.2"/>
<path stroke="#6dff8a" d="M529.6 324.2 L536.8 325.0 L543.6 325.6 L549.9 326.1 L555.9 326.6 L561.4 326.9 L566.4 327.0"/>
<path stroke="#73ff83" d="M566.4 327.0 L571.0 327.1 L575.1 327.0 L578.8 326.8 L582.0 326.5 L584.8 326.1 L587.1 325.5"/>
<path stroke="#77ff80" d="M587.1 325.5 L588.9 324.8 L590.2 324.0 L591.1 323.0 L591.5 322.0 L591.5 320.8 L590.9 319.4"/>
<path stroke="#7dff7a" d="M590.9 319.4 L589.9 318.0 L588.4 316.4 L586.5 314.6 L584.0 312.8 L581.2 310.8 L577.8 308.7"/>
<path stroke="#80ff77" d="M577.8 308.7 L574.0 306.5 L569.7 304.1 L565.0 301.7 L559.8 299.1 L554.1 296.4 L548.1 293.5"/>
<path stroke="#83ff73" d="M548.1 293.5 L541.6 290.6 L534.7 287.5 L527.3 284.3 L519.6 281.0 L511.5 277.6 L503.0 274.1"/>
<path stroke="#8aff6d" d="M503.0 274.1 L494.2 270.6 L485.1 266.9 L475.7 263.1 L466.0 259.3 L456.2 255.4 L446.1 251.5"/>
<path stroke="#8dff6a" d="M446.1 251.5 L435.9 247.6 L425.7 243.6 L415.4 239.6 L405.2 235.6 L395.1 231.7 L385.2 227.8"/>
<path stroke="#90ff66" d="M385.2 227.8 L375.6 224.0 L366.4 220.3 L357.6 216.7 L349.4 213.3 L341.8 210.0 L335.0 206.9"/>
<path stroke="#97ff60" d="M335.0 206.9 L329.0 204.1 L323.9 201.5 L319.8 199.2 L316.8 197.2 L314.9 195.5 L314.1 194.1"/>
<path stroke="#9aff5d" d="M314.1 194.1 L314.4 192.9 L315.9 192.1 L318.5 191.6 L322.1 191.4 L326.8 191.5 L332.4 191.8"/>
<path stroke="#a0ff56" d="M332.4 191.8 L338.9 192.4 L346.2 193.2 L354.1 194.1 L362.7 195.2 L371.7 196.5 L381.2 197.9"/>
<path stroke="#a4ff53" d="M381.2 197.9 L391.0 199.3 L401.0 200.8 L411.2 202.4 L421.5 204.0 L431.7 205.6 L441.9 207.1"/>
<path stroke="#a7ff50" d="M441.9 207.1 L452.0 208.7 L462.0 210.2 L471.7 211.6 L481.3 213.0 L490.5 214.3 L499.4 215.5"/>
<path stroke="#adff49" d="M499.4 215.5 L508.0 216.6 L516.3 217.7 L524.1 218.6 L531.6 219.4 L538.7 220.1 L545.4 220.7"/>
<path stroke="#b1ff46" d="M545.4 220.7 L551.6 221.2 L557.4 221.6 L562.8 221.8 L567.7 221.9 L572.1 221.9 L576.1 221.8"/>
<path stroke="#b4ff43" d="M576.1 221.8 L579.6 221.5 L582.7 221.1 L585.2 220.6 L587.3 220.0 L589.0 219.2 L590.1 218.3"/>
<path stroke="#baff3c" d="M590.1 218.3 L590.8 217.3 L591.0 216.1 L590.8 214.8 L590.0 213.4 L588.8 211.9 L587.1 210.2"/>
<path stroke="#beff39" d="M587.1 210.2 L584.9 208.4 L582.3 206.4 L579.2 204.4 L575.6 202.2 L571.6 199.9 L567.1 197.4"/>
<path stroke="#c4ff33" d="M567.1 197.4 L562.1 194.9 L556.7 192.2 L550.8 189.4 L544.5 186.4 L537.8 183.4 L530.7 180.2"/>
<path stroke="#c7ff30" d="M530.7 180.2 L523.1 176.9 L515.2 173.6 L506.9 170.1 L498.2 166.5 L489.3 162.9 L480.0 159.1"/>
<path stroke="#caff2c" d="M480.0 159.1 L470.4 155.3 L460.6 151.4 L450.7 147.5 L440.5 143.5 L430.3 139.5"/>
</g>
<path d="M419.4 339.4 L427.5 347.5 M419.4 347.5 L427.5 339.4" stroke="#ff0000" stroke-width="1.4" fill="none"/>
</g>
<rect x="210.5" y="179.5" width="1302" height="709" fill="none" stroke="#000" stroke-width="1.2"/>
<g stroke="#000" stroke-width="1.15" id="ticks">
<path d="M273.5 889 V893.6"/>
<path d="M210 854.5 H205.2"/>
<path d="M429.5 889 V893.6"/>
<path d="M210 769.5 H205.2"/>
<path d="M586.5 889 V893.6"/>
<path d="M210 683.5 H205.2"/>
<path d="M742.5 889 V893.6"/>
<path d="M210 598.5 H205.2"/>
<path d="M899.5 889 V893.6"/>
<path d="M210 513.5 H205.2"/>
<path d="M1055.5 889 V893.6"/>
<path d="M210 428.5 H205.2"/>
<path d="M1211.5 889 V893.6"/>
<path d="M210 343.5 H205.2"/>
<path d="M1368.5 889 V893.6"/>
<path d="M210 258.5 H205.2"/>
</g>
<g opacity=".999"><text class="tick" x="273.5" y="910.2" text-anchor="middle">0.50</text>
<text class="tick" x="200.0" y="860.0" text-anchor="end">0.50</text>
<text class="tick" x="429.5" y="910.2" text-anchor="middle">0.75</text>
<text class="tick" x="200.0" y="775.0" text-anchor="end">0.75</text>
<text class="tick" x="586.5" y="910.2" text-anchor="middle">1.00</text>
<text class="tick" x="200.0" y="690.0" text-anchor="end">1.00</text>
<text class="tick" x="742.5" y="910.2" text-anchor="middle">1.25</text>
<text class="tick" x="200.0" y="605.0" text-anchor="end">1.25</text>
<text class="tick" x="899.5" y="910.2" text-anchor="middle">1.50</text>
<text class="tick" x="200.0" y="520.0" text-anchor="end">1.50</text>
<text class="tick" x="1055.5" y="910.2" text-anchor="middle">1.75</text>
<text class="tick" x="200.0" y="434.0" text-anchor="end">1.75</text>
<text class="tick" x="1211.5" y="910.2" text-anchor="middle">2.00</text>
<text class="tick" x="200.0" y="349.0" text-anchor="end">2.00</text>
<text class="tick" x="1368.5" y="910.2" text-anchor="middle">2.25</text>
<text class="tick" x="200.0" y="264.0" text-anchor="end">2.25</text>
<text class="tick" x="861.4" y="929" text-anchor="middle">AB Distance</text>
<text class="tick" transform="translate(159.5 535.8) rotate(-90)" text-anchor="middle">BC Distance</text></g>
<g id="tbicons">
<!-- grip -->
<g fill="#b8b8b8"><rect x="4" y="27" width="1" height="1"/><rect x="4" y="31" width="1" height="1"/><rect x="4" y="35" width="1" height="1"/><rect x="4" y="39" width="1" height="1"/><rect x="4" y="43" width="1" height="1"/><rect x="4" y="47" width="1" height="1"/><rect x="4" y="51" width="1" height="1"/><rect x="4" y="55" width="1" height="1"/><rect x="4" y="59" width="1" height="1"/><rect x="4" y="63" width="1" height="1"/></g>
<g fill="#ffffff"><rect x="3" y="28" width="1" height="1"/><rect x="3" y="32" width="1" height="1"/><rect x="3" y="36" width="1" height="1"/><rect x="3" y="40" width="1" height="1"/><rect x="3" y="44" width="1" height="1"/><rect x="3" y="48" width="1" height="1"/><rect x="3" y="52" width="1" height="1"/><rect x="3" y="56" width="1" height="1"/><rect x="3" y="60" width="1" height="1"/><rect x="3" y="64" width="1" height="1"/></g>
<!-- separators -->
<rect x="141" y="27" width="1" height="38" fill="#c9c9c9"/>
<rect x="331" y="27" width="1" height="38" fill="#c9c9c9"/>
<!-- home -->
<path d="M15.6 48.3 L24.9 41.1 L34.2 48.3" fill="none" stroke="#000" stroke-width="1.9" stroke-linecap="round" stroke-linejoin="miter"/>
<rect x="29.2" y="40" width="2.9" height="6" fill="#000"/>
<path d="M24.9 43.8 L32 49.4 V55.6 Q32 56 31.6 56 H27 V51.2 H23 V56 H18.2 Q17.8 56 17.8 55.6 V49.4 Z" fill="#000"/>
<!-- back -->
<path d="M69.3 39.6 L62 46.5 L69.3 53.9" fill="none" stroke="#000" stroke-width="4.6" stroke-linecap="round" stroke-linejoin="miter"/>
<path d="M63 46.5 H75.8" fill="none" stroke="#000" stroke-width="4.6" stroke-linecap="round"/>
<!-- forward -->
<path d="M110 39.6 L117.3 46.5 L110 53.9" fill="none" stroke="#000" stroke-width="4.6" stroke-linecap="round" stroke-linejoin="miter"/>
<path d="M116.3 46.5 H103.5" fill="none" stroke="#000" stroke-width="4.6" stroke-linecap="round"/>
<!-- move -->
<path d="M171.9 38 V55.4 M163.5 46.5 H180.4" fill="none" stroke="#000" stroke-width="3.1"/>
<path d="M171.9 35.2 L175.5 39.5 H168.3 Z M171.9 58 L175.5 53.6 H168.3 Z M160.9 46.5 L165.1 42.9 V50.1 Z M183 46.5 L178.8 42.9 V50.1 Z" fill="#000" stroke="#000" stroke-width="0.7" stroke-linejoin="round"/>
<!-- zoom -->
<circle cx="213.4" cy="44.9" r="7.5" fill="none" stroke="#000" stroke-width="3.1"/>
<path d="M218.9 50.6 L224.4 56" fill="none" stroke="#000" stroke-width="3.6" stroke-linecap="round"/>
<!-- subplots -->
<path d="M248.2 40.8 H268 M248.2 47.5 H268 M248.2 53.9 H268" fill="none" stroke="#000" stroke-width="1.5" stroke-linecap="butt"/>
<rect x="251.4" y="38.3" width="5" height="5" rx="1" fill="#000"/><rect x="260" y="45" width="5" height="5" rx="1" fill="#000"/><rect x="253.1" y="51.4" width="5" height="5" rx="1" fill="#000"/>
<!-- chart -->
<path d="M289.3 36.9 V55.6 H312.9" fill="none" stroke="#000" stroke-width="1.4"/>
<path d="M292.6 51.6 L298.5 45 L301.8 49 L308.8 41.6" fill="none" stroke="#000" stroke-width="3" stroke-linejoin="miter"/>
<path d="M304.6 38.4 L312.4 38.2 L312.2 46.2 Z" fill="#000"/>
<!-- save -->
<path d="M354.4 37.9 H366.8 L370.9 42.2 V54 Q370.9 55 369.9 55 H354.4 Q353.4 55 353.4 54 V38.9 Q353.4 37.9 354.4 37.9 Z" fill="none" stroke="#000" stroke-width="2.1" stroke-linejoin="round"/>
<path d="M355.7 37.5 H364.8 V43.6 H355.7 Z M361 38.9 V42.5 H363.2 V38.9 Z" fill="#000" fill-rule="evenodd"/>
<path d="M356.5 55 V49.5 H367.8 V55" fill="none" stroke="#000" stroke-width="1.5"/>
</g>
<g id="mplicon">
<circle cx="8.1" cy="10.9" r="7.5" fill="#8ea3bf" opacity=".55"/>
<circle cx="8.1" cy="10.9" r="7" fill="#fff"/>
<path d="M8.8 10.5 L4.2 6.2 Q5.3 4.6 7 5 Z" fill="#ff6a00"/>
<path d="M8.8 10.5 L2.3 8.7 Q1.9 10.5 2.4 12.3 Z" fill="#f5c400"/>
<path d="M8.8 10.5 L9.4 6.3 Q10.6 5.9 11.3 6.8 Z" fill="#9ccc3c"/>
<path d="M8.8 10.5 L6.8 15 Q7.9 15.6 8.9 15.1 Z" fill="#78d878"/>
<path d="M8.8 10.5 L12.1 16 Q12.9 15.6 13.3 15 Z" fill="#d2691e"/>
<path d="M8.8 10.5 L5 12 Q5.3 12.8 5.9 13 Z" fill="#3a9a8a"/>
<circle cx="8.9" cy="10.4" r="1" fill="#2a4a6a"/>
</g>
<g id="winbtns">
<defs>
<linearGradient id="gb" x1="0" y1="0" x2="0" y2="1"><stop offset="0" stop-color="#b4c1d4"/><stop offset=".45" stop-color="#c2cddd"/><stop offset=".5" stop-color="#6a85a7"/><stop offset="1" stop-color="#8fa6c2"/></linearGradient>
<linearGradient id="gr" x1="0" y1="0" x2="0" y2="1"><stop offset="0" stop-color="#e0a79d"/><stop offset=".45" stop-color="#e39a8e"/><stop offset=".5" stop-color="#c2402a"/><stop offset=".8" stop-color="#cf4a2c"/><stop offset="1" stop-color="#e08a5a"/></linearGradient>
<clipPath id="btnclip"><path d="M1574 0 H1677 V13 Q1677 17 1673 17 H1578 Q1574 17 1574 13 Z"/></clipPath>
</defs>
<path d="M1573 0 H1678 V13.5 Q1678 18 1673.5 18 H1577.500 Q1573 18 1573 13.500 Z" fill="none" stroke="rgba(255,255,255,.45)" stroke-width="1"/>
<g clip-path="url(#btnclip)">
<rect x="1574" y="0" width="55" height="17" fill="url(#gb)"/>
<rect x="1629" y="0" width="48" height="17" fill="url(#gr)"/>
</g>
<path d="M1574 0 V13 Q1574 17 1578 17 H1673 Q1677 17 1677 13 V0 M1602.500 0 V17 M1629 0 V17" fill="none" stroke="#1b2c44" stroke-width="1"/>
<path d="M1575 0 V13 Q1575 16 1578 16 H1601.500 V0 M1603.500 0 V16 H1628 V0 M1630 0 V16 H1673 Q1676 16 1676 13 V0" fill="none" stroke="rgba(255,255,255,.35)" stroke-width="1"/>
<rect x="1584" y="9" width="10.500" height="3.500" fill="#fff" stroke="#3a4a60" stroke-width=".9"/>
<path d="M1613 6.200 V3.700 H1619.100 V9.800 H1617.500" fill="none" stroke="#3a4a60" stroke-width="3.200"/>
<path d="M1613 6.200 V3.700 H1619.100 V9.800 H1617.500" fill="none" stroke="#fff" stroke-width="1.500"/>
<rect x="1610.900" y="6.200" width="6.100" height="5.400" fill="none" stroke="#3a4a60" stroke-width="3.200"/>
<rect x="1610.900" y="6.200" width="6.100" height="5.400" fill="none" stroke="#fff" stroke-width="1.600"/>
<path d="M1649.700 4.300 L1657.400 11.800 M1657.400 4.300 L1649.700 11.800" fill="none" stroke="#4a3038" stroke-width="4.600"/>
<path d="M1649.700 4.300 L1657.400 11.800 M1657.400 4.300 L1649.700 11.800" fill="none" stroke="#fff" stroke-width="2.800"/>
</g>
<g id="taskbar-items">
<defs>
<linearGradient id="tb1" x1="0" y1="0" x2="0" y2="1"><stop offset="0" stop-color="#fff" stop-opacity=".46"/><stop offset=".45" stop-color="#fff" stop-opacity=".20"/><stop offset=".55" stop-color="#fff" stop-opacity=".08"/><stop offset="1" stop-color="#fff" stop-opacity=".10"/></linearGradient>
<linearGradient id="tb2" x1="0" y1="0" x2="0" y2="1"><stop offset="0" stop-color="#fff" stop-opacity=".85"/><stop offset=".45" stop-color="#fff" stop-opacity=".62"/><stop offset=".55" stop-color="#fff" stop-opacity=".45"/><stop offset="1" stop-color="#fff" stop-opacity=".5"/></linearGradient>
<radialGradient id="orb" cx=".5" cy=".85" r=".8"><stop offset="0" stop-color="#35d0ff"/><stop offset=".35" stop-color="#1789c8"/><stop offset=".7" stop-color="#0f4f86"/><stop offset="1" stop-color="#1b5a92"/></radialGradient>
<linearGradient id="orbhi" x1="0" y1="0" x2="0" y2="1"><stop offset="0" stop-color="#fff" stop-opacity=".75"/><stop offset="1" stop-color="#fff" stop-opacity=".15"/></linearGradient>
<linearGradient id="ie" x1="0" y1="0" x2="0" y2="1"><stop offset="0" stop-color="#2fa5e6"/><stop offset=".5" stop-color="#6fdcff"/><stop offset="1" stop-color="#2a9ee0"/></linearGradient>
<linearGradient id="fold" x1="0" y1="0" x2="0" y2="1"><stop offset="0" stop-color="#fdf0b8"/><stop offset="1" stop-color="#f2cf68"/></linearGradient>
<linearGradient id="strk" x1="0" y1="0" x2="1" y2="0"><stop offset="0" stop-color="#cfe6f7" stop-opacity="0"/><stop offset=".5" stop-color="#cfe6f7" stop-opacity=".75"/><stop offset="1" stop-color="#cfe6f7" stop-opacity="0"/></linearGradient>
</defs>
<!-- light streak -->
<filter id="blr" x="-20%" y="-20%" width="140%" height="140%"><feGaussianBlur stdDeviation="1.6"/></filter>
<clipPath id="tbclip"><rect x="0" y="1012" width="1680" height="38"/></clipPath>
<g clip-path="url(#tbclip)"><g filter="url(#blr)">
<path d="M1204 1008 Q1236 1026 1250 1053 H1263 Q1247 1024 1222 1008 Z" fill="#b5d6ee" opacity=".62"/>
<path d="M1196 1008 Q1228 1026 1241 1053 H1270 Q1254 1024 1230 1008 Z" fill="#7fb6e2" opacity=".3"/>
</g></g>
<!-- start orb -->
<circle cx="27" cy="1030" r="18.600" fill="#5aa0d0" opacity=".6"/>
<circle cx="27" cy="1030" r="17.600" fill="url(#orb)" stroke="#0e3a66" stroke-width=".8"/>
<path d="M10.500 1027.500 A17 17 0 0 1 43.500 1027.500 Q27 1033 10.500 1027.500 Z" fill="url(#orbhi)"/>
<path d="M19 1020.500 Q23 1018.300 27.500 1020.300 L26 1028 Q22 1026.300 17.500 1028.500 Z" fill="#f2612c"/>
<path d="M29.500 1021.200 Q33.500 1023.300 38.700 1021.600 L36.800 1029.800 Q32 1031.300 27.800 1029 Z" fill="#8cc43f"/>
<path d="M17 1030.500 Q21.500 1028.300 25.600 1030 L24 1038 Q20 1036.300 15.300 1038.500 Z" fill="#2d9be6"/>
<path d="M27.400 1031 Q31.500 1033.300 36.400 1031.800 L34.600 1040 Q30 1041.500 25.700 1039.200 Z" fill="#fbbd2e"/>
<!-- IE -->
<text transform="translate(90.2 1043.6) scale(1.27 1.42)" x="0" y="0" text-anchor="middle" font-family="Liberation Sans,sans-serif" font-weight="bold" font-size="41" fill="url(#ie)" stroke="#2492d6" stroke-width=".5">e</text>
<path d="M100.500 1018.500 C104.500 1009.500 86 1015.500 78.500 1028.500 C73.500 1037.500 74 1045.500 81.500 1042.500" fill="none" stroke="#f6b800" stroke-width="2.300" stroke-linecap="round"/>
<!-- Explorer button -->
<rect x="122" y="1010.500" width="58.500" height="38.500" rx="3" fill="url(#tb1)" stroke="#16324f" stroke-width="1"/>
<rect x="123" y="1011.500" width="56.500" height="36.500" rx="2.500" fill="none" stroke="#fff" stroke-opacity=".55" stroke-width="1"/>
<path d="M135.500 1020 Q135.500 1017.500 138 1017.500 H150 Q151.500 1017.500 152 1019 L152.500 1020 H164.500 Q167 1020 167 1022.500 V1044.500 H135.500 Z" fill="#f0cf6c" stroke="#d9b04a" stroke-width=".8"/>
<rect x="138.500" y="1018.300" width="11" height="2.600" fill="#fff"/><rect x="139" y="1018.300" width="3" height="2.400" fill="#1eb53a"/>
<path d="M145 1020.200 H158 L159 1022 H145 Z" fill="#f7dc8a"/><rect x="147" y="1020.400" width="10" height="2.400" fill="#fff"/><rect x="147" y="1020.400" width="3" height="2.400" fill="#d93025"/>
<path d="M152.500 1022.300 H165 V1025 H152.500 Z" fill="#f7dc8a"/><rect x="155" y="1022.400" width="8.500" height="2.400" fill="#fff"/><rect x="155" y="1022.400" width="3" height="2.400" fill="#1e88e5"/>
<path d="M136.200 1026 Q136.200 1024.500 137.700 1024.500 H151 L153 1026.300 H166.300 V1044 H136.200 Z" fill="url(#fold)"/>
<path d="M139.500 1044.800 V1035.800 Q139.500 1033.800 141.500 1033.800 H160 Q162 1033.800 162 1035.800 V1044.800 H156.200 V1039 H145.800 V1044.800 Z" fill="#b5e2f8" fill-opacity=".8" stroke="#5fa8d8" stroke-width=".7"/>
<!-- WMP -->
<rect x="201.500" y="1020.500" width="22.500" height="22.500" fill="#8ec8ea" opacity=".75"/>
<rect x="199" y="1019.700" width="21.500" height="23" fill="#9fd2ef" stroke="#7fbce0" stroke-width=".6"/>
<circle cx="209.600" cy="1031" r="8.700" fill="#f57c14"/>
<circle cx="209.600" cy="1031" r="8.700" fill="none" stroke="#e0650a" stroke-width=".8"/>
<path d="M206.300 1025.400 L216 1031 L206.300 1036.600 Z" fill="#fff"/>
<!-- Chrome button -->
<rect x="246" y="1010.500" width="58" height="38.500" rx="3" fill="url(#tb1)" stroke="#16324f" stroke-width="1"/>
<rect x="247" y="1011.500" width="56" height="36.500" rx="2.500" fill="none" stroke="#fff" stroke-opacity=".55" stroke-width="1"/>
<g transform="translate(275 1029.800)">
<circle r="14.700" fill="#fff"/>
<path d="M0 0 L-12.730 -7.350 A14.700 14.700 0 0 1 12.730 -7.350 Z" fill="#de4a3c"/>
<path d="M0 0 L12.730 -7.350 A14.700 14.700 0 0 1 0 14.700 Z" fill="#fdd03e"/>
<path d="M0 0 L0 14.700 A14.700 14.700 0 0 1 -12.730 -7.350 Z" fill="#1da462"/>
<path d="M0 -6.700 H13.200 A14.700 14.700 0 0 0 -12.730 -7.350 L-5.800 3.350 Z" fill="#de4a3c"/>
<path d="M5.800 3.350 L-0.800 14.680 A14.700 14.700 0 0 0 13.200 -6.700 H0 Z" fill="#fdd03e"/>
<path d="M-5.800 3.350 L-12.730 -7.350 A14.700 14.700 0 0 0 -0.800 14.680 L5.800 3.350 Z" fill="#1da462"/>
<circle r="6.700" fill="#fff"/><circle r="5.300" fill="#4a8af4"/>
</g>
<!-- IPython button (active) -->
<rect x="362" y="1010.500" width="5" height="38.500" rx="2" fill="url(#tb1)" stroke="#16324f" stroke-width="1"/>
<rect x="357" y="1010.500" width="5.500" height="38.500" rx="2" fill="url(#tb2)" stroke="#16324f" stroke-width="1"/>
<rect x="308" y="1010.500" width="50" height="38.500" rx="3" fill="url(#tb2)" stroke="#16324f" stroke-width="1"/>
<rect x="309" y="1011.500" width="48" height="36.500" rx="2.500" fill="none" stroke="#fff" stroke-opacity=".7" stroke-width="1"/>
<rect x="317" y="1014.200" width="31.800" height="31.300" fill="#fff"/>
<rect x="317" y="1018" width="31.800" height=".9" fill="#9aa88e"/><rect x="317" y="1041" width="31.800" height=".9" fill="#9aa88e"/>
<text x="319.600" y="1035" font-family="Liberation Sans,sans-serif" font-size="15.500" fill="#1a1a1a" textLength="11.500" lengthAdjust="spacingAndGlyphs">IP</text>
<text x="331.300" y="1035" font-family="Liberation Sans,sans-serif" font-size="11.500" fill="#2e9a3a" textLength="16.300" lengthAdjust="spacingAndGlyphs">[y]:</text>
<!-- Word button -->
<rect x="370" y="1010.500" width="58.500" height="38.500" rx="3" fill="url(#tb1)" stroke="#16324f" stroke-width="1"/>
<rect x="371" y="1011.500" width="56.500" height="36.500" rx="2.500" fill="none" stroke="#fff" stroke-opacity=".55" stroke-width="1"/>
<rect x="399" y="1018.400" width="14.500" height="22.800" fill="#fff" stroke="#2b579a" stroke-width="1"/>
<path d="M402.500 1022.500 H410.500 M402.500 1025.500 H410.500 M402.500 1028.500 H410.500 M402.500 1031.500 H410.500 M402.500 1034.500 H410.500 M402.500 1037.500 H410.500" stroke="#2b579a" stroke-width="1.100"/>
<path d="M384.200 1018 L401.700 1015 V1044.700 L384.200 1041.800 Z" fill="#2b579a"/>
<text x="392.900" y="1035" text-anchor="middle" font-family="Liberation Sans,sans-serif" font-weight="bold" font-size="13.500" fill="#fff">W</text>
<!-- tray -->
<path d="M1517.500 1033 L1521.300 1028.800 L1525.100 1033 Z" fill="#fff"/>
<rect x="1541.500" y="1024" width="11" height="9" fill="#2a4a78" stroke="#fff" stroke-width="1.200"/>
<path d="M1544.500 1035.800 H1550.500 M1547.500 1033.500 V1035.800" stroke="#fff" stroke-width="1.200"/>
<path d="M1540 1020.500 V1024 Q1540 1025.500 1541.500 1025.500 V1037.500 M1538.500 1020.500 V1024 H1543 V1020.500" fill="none" stroke="#fff" stroke-width="1"/>
<path d="M1562.700 1027.200 H1565 L1569 1023 V1039 L1565 1034.800 H1562.700 Z" fill="#f4f6f8" stroke="#c0c8d0" stroke-width=".5"/>
<path d="M1571.300 1028.600 Q1573 1031 1571.300 1033.400 M1573.600 1026.800 Q1576.400 1031 1573.600 1035.200 M1575.900 1025 Q1579.600 1031 1575.900 1037" fill="none" stroke="#e8eef4" stroke-width="1"/>
<text x="1624.600" y="1027.200" text-anchor="middle" font-family="Liberation Sans,sans-serif" font-size="12" fill="#fff" textLength="26.500" lengthAdjust="spacingAndGlyphs">15:11</text>
<text x="1624.500" y="1043.700" text-anchor="middle" font-family="Liberation Sans,sans-serif" font-size="12" fill="#fff" textLength="57.600" lengthAdjust="spacingAndGlyphs">02/05/2018</text>
<!-- show desktop -->
<rect x="1666.500" y="1011.500" width="14" height="39" fill="#5a7ea8" fill-opacity=".55" stroke="#16263c" stroke-width="1"/>
<rect x="1667.500" y="1012.500" width="12" height="37" fill="none" stroke="#fff" stroke-opacity=".35" stroke-width="1"/>
</g>

</svg>
</body></html>
